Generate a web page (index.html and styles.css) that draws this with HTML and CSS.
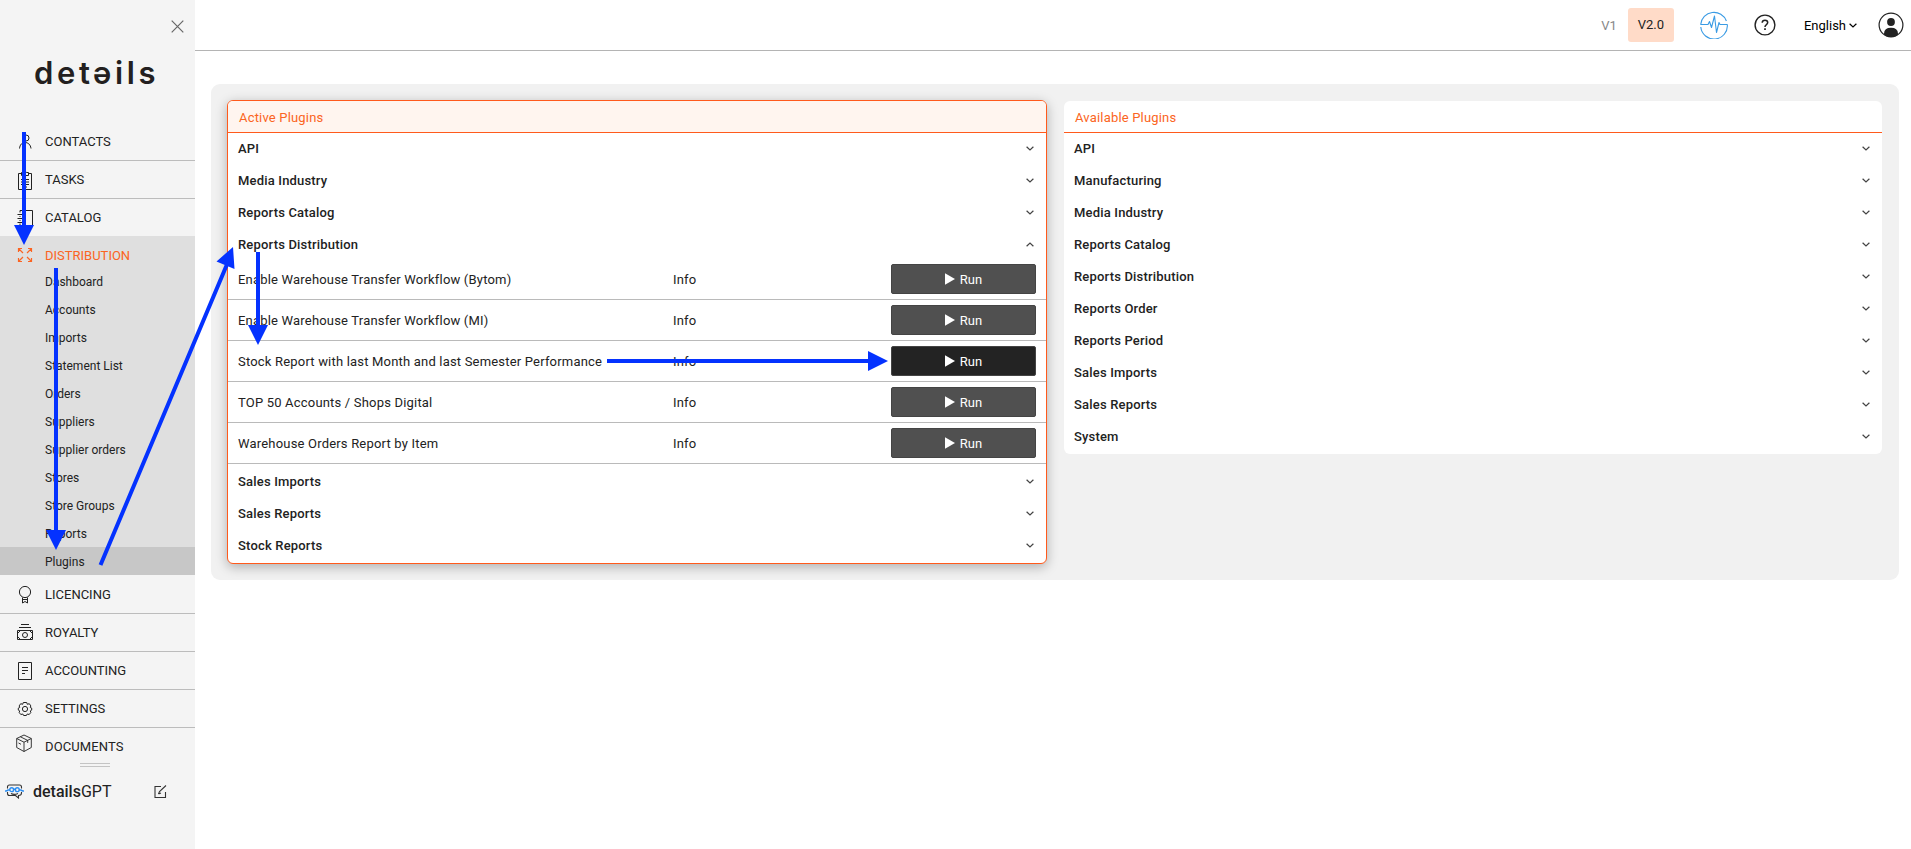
FILE: index.html
```html
<!DOCTYPE html>
<html lang="en">
<head>
<meta charset="utf-8">
<title>details – Plugins</title>
<link rel="stylesheet" href="styles.css">
</head>
<body>
<svg class="defs" width="0" height="0">
  <symbol id="chev" viewBox="0 0 8 5"><path d="M.6.7 4 4 7.400.7" fill="none" stroke="currentColor" stroke-width="1.2"/></symbol>
  <symbol id="play" viewBox="0 0 10 12"><path d="M0 .3 10 6 0 11.700z" fill="currentColor"/></symbol>
</svg>
<div class="app">
  <aside class="sidebar">
    <div class="close-row"><svg width="13" height="13" viewBox="0 0 13 13"><path d="M.7.7 12.300 12.300M12.300.7.7 12.300" stroke="#666" stroke-width="1.200"/></svg></div>
    <div class="logo">detəils</div>
    <nav class="menu">
      <a class="item"><svg class="ico" viewBox="0 0 16 20"><g fill="none" stroke="#222"><circle cx="9" cy="6" r="3"/><path d="M2.500 16.500C3 12.500 5 10.500 8 10.500s5.500 2 6 6"/></g></svg><span>CONTACTS</span></a>
      <a class="item"><svg class="ico down" viewBox="0 0 16 20"><g fill="none" stroke="#222"><path d="M4 2.500H1.500v16h13v-16H12M4.500 4.500v-3h2c0-1.300 3-1.300 3 0h2v3zM4 8.500h8M4 11h8M4 13.500h8M6 16h4"/></g></svg><span>TASKS</span></a>
      <a class="item catalog"><svg class="ico" viewBox="0 0 16 20"><g fill="none" stroke="#222"><path d="M6 2.500h9.500v15H6zM6 2.500H3v2M3 8v1M3 12v1M3 15.500v2h3M.5 6.500h5M.5 10.500h5M.5 14.500h5"/></g></svg><span>CATALOG</span></a>
      <div class="group">
        <a class="item active"><svg class="ico" viewBox="0 0 16 20"><g fill="none" stroke="#fb6422" stroke-width="1.200"><path d="M1.500 7V3.500H5M1.500 3.500 6 8M11 3.500h3.500V7M14.500 3.500 10 8M1.500 13v3.500H5M1.500 16.500 6 12M14.500 13v3.500H11M14.500 16.500 10 12"/></g></svg><span>DISTRIBUTION</span></a>
        <a class="sub">Dashboard</a><a class="sub">Accounts</a><a class="sub">Imports</a><a class="sub">Statement List</a><a class="sub">Orders</a><a class="sub">Suppliers</a><a class="sub">Supplier orders</a><a class="sub">Stores</a><a class="sub">Store Groups</a><a class="sub">Reports</a><a class="sub current">Plugins</a>
      </div>
      <a class="item after-group"><svg class="ico" viewBox="0 0 16 20"><g fill="none" stroke="#222"><circle cx="8" cy="7" r="5.600"/><path d="M5.500 12.500v5.500L8 16.500l2.500 1.500v-5.500M5.500 14.500h5"/></g></svg><span>LICENCING</span></a>
      <a class="item"><svg class="ico" viewBox="0 0 16 20"><g fill="none" stroke="#222"><path d="M4 1.500h8M2 4.500h12M.5 7.500h15v9H.5z"/><circle cx="8" cy="12" r="2.500"/><path d="M.5 10.500 3.500 7.500M15.500 10.500l-3-3M.5 13.500l3 3M15.500 13.500l-3 3"/></g></svg><span>ROYALTY</span></a>
      <a class="item"><svg class="ico" viewBox="0 0 16 20"><g fill="none" stroke="#222"><path d="M1.500 1.500h13v17h-13zM5 6.500h6M5 9.500h6M5 12.500h3"/></g></svg><span>ACCOUNTING</span></a>
      <a class="item"><svg class="ico" viewBox="0 0 16 20"><g fill="none" stroke="#222"><path stroke-linejoin="round" d="M6.300 3.500h3.400l.6 1.800 2-.6 1.500 2.200-.5 1.600 1.400.6v2l-1.400.8.5 1.600-1.600 2-2-.5-.8 1.500H6.600l-.8-1.500-2 .5-1.600-2 .5-1.600-1.400-.8v-2l1.400-.6-.5-1.600 1.500-2.200 2 .6z"/><circle cx="8" cy="10" r="2.600"/></g></svg><span>SETTINGS</span></a>
      <a class="item last"><svg class="ico up" viewBox="0 0 16 20"><g fill="none" stroke="#222" stroke-width=".9" stroke-linejoin="round"><path d="M.7 5.500 8 2l7.300 3.500v9L8 18.500.7 14.500zM.7 5.500 8 9.200l7.300-3.700M8 9.200v9.300M4.400 3.800l7.300 3.600v2.500M2.500 10l2.500 1.300"/></g></svg><span>DOCUMENTS</span></a>
    </nav>
    <div class="grip"></div>
    <div class="gpt">
      <svg width="19" height="15" viewBox="0 0 19 15"><g fill="none"><path stroke="#333" stroke-width="1.100" d="M2.500 4.500V3Q2.500 1 4.500 1h10q2 0 2 2v1.500M2.500 8v1.500q0 2 2 2h6l3 2.500v-2.500q3-.2 3-2.500V8M6 9.500q3 1.800 7 0"/><g stroke="#2a8df2" stroke-width="1.400"><circle cx="6.700" cy="5.700" r="1.900"/><circle cx="12.300" cy="5.700" r="1.900"/><path d="M8.600 5.300h1.800M0 7q2 .3 3-1h1.800M19 7q-2 .3-3-1h-1.800"/></g></g></svg>
      <span class="gpt-name"><b>details</b>GPT</span>
      <svg class="edit" width="13" height="13" viewBox="0 0 13 13"><path d="M7 1.500H1v11h10.500V7M4.500 9l1-2.500L12 .5M4.500 9l2.500-1" fill="none" stroke="#333" stroke-width="1.100"/></svg>
    </div>
  </aside>
  <div class="page">
    <header class="topbar">
      <span class="v1">V1</span>
      <span class="v2">V2.0</span>
      <svg class="pulse" width="28" height="28" viewBox="0 0 28 28"><g fill="none" stroke="#3a9be4" stroke-width="1.100"><path d="M.7 13.500A13.300 13.300 0 0 1 26.400 10M.8 16A13.300 13.300 0 0 0 27.300 13.500"/><path stroke-linejoin="round" d="M.5 13.500H8l1.500-3 2 6L14.500 5l2 16.500 2.500-10 1 2h7.500"/></g></svg>
      <svg class="help" width="22" height="22" viewBox="0 0 22 22"><g fill="none" stroke="#222" stroke-width="1.400"><circle cx="11" cy="11" r="9.900"/><path stroke-width="1.500" d="M8.200 8.800Q8.300 6.200 11 6.200t2.700 2.300Q13.700 9.800 12.200 10.800 11 11.600 11 13"/><path stroke-width="1.700" d="M11 14.300V16"/></g></svg>
      <span class="lang">English<svg width="8" height="5"><use href="#chev"/></svg></span>
      <svg class="user" width="26" height="26" viewBox="0 0 26 26"><clipPath id="uc"><circle cx="13" cy="13" r="12"/></clipPath><circle cx="13" cy="13" r="11.900" fill="none" stroke="#222" stroke-width="1.200"/><circle cx="13" cy="10" r="3.900" fill="#222"/><path clip-path="url(#uc)" d="M6 26v-4.500Q6.200 15.800 13 15.800t7 5.700V26z" fill="#222"/></svg>
    </header>
    <main class="board">
      <section class="card picked">
        <h2>Active Plugins</h2>
        <div class="cat">API<svg><use href="#chev"/></svg></div>
        <div class="cat">Media Industry<svg><use href="#chev"/></svg></div>
        <div class="cat">Reports Catalog<svg><use href="#chev"/></svg></div>
        <div class="cat open">Reports Distribution<svg><use href="#chev"/></svg></div>
        <div class="rows">
          <div class="row"><span>Enable Warehouse Transfer Workflow (Bytom)</span><span>Info</span><button><svg><use href="#play"/></svg>Run</button></div>
          <div class="row"><span>Enable Warehouse Transfer Workflow (MI)</span><span>Info</span><button><svg><use href="#play"/></svg>Run</button></div>
          <div class="row"><span>Stock Report with last Month and last Semester Performance</span><span>Info</span><button class="hover"><svg><use href="#play"/></svg>Run</button></div>
          <div class="row"><span>TOP 50 Accounts / Shops Digital</span><span>Info</span><button><svg><use href="#play"/></svg>Run</button></div>
          <div class="row"><span>Warehouse Orders Report by Item</span><span>Info</span><button><svg><use href="#play"/></svg>Run</button></div>
        </div>
        <div class="cat">Sales Imports<svg><use href="#chev"/></svg></div>
        <div class="cat">Sales Reports<svg><use href="#chev"/></svg></div>
        <div class="cat">Stock Reports<svg><use href="#chev"/></svg></div>
      </section>
      <section class="card">
        <h2>Available Plugins</h2>
        <div class="cat">API<svg><use href="#chev"/></svg></div>
        <div class="cat">Manufacturing<svg><use href="#chev"/></svg></div>
        <div class="cat">Media Industry<svg><use href="#chev"/></svg></div>
        <div class="cat">Reports Catalog<svg><use href="#chev"/></svg></div>
        <div class="cat">Reports Distribution<svg><use href="#chev"/></svg></div>
        <div class="cat">Reports Order<svg><use href="#chev"/></svg></div>
        <div class="cat">Reports Period<svg><use href="#chev"/></svg></div>
        <div class="cat">Sales Imports<svg><use href="#chev"/></svg></div>
        <div class="cat">Sales Reports<svg><use href="#chev"/></svg></div>
        <div class="cat">System<svg><use href="#chev"/></svg></div>
      </section>
    </main>
  </div>
</div>
<svg class="arrows" viewBox="0 0 1911 849">
  <g stroke="#0432ff" stroke-width="4"><path d="M24 132v95M56 268v264M258 252v75M607 361h263M100.500 565 228 262"/></g>
  <g fill="#0432ff"><path d="M14 225h20l-10 20zM46 530h20l-10 20zM248 325h20l-10 20zM868 351v20l20-10zM233 247l1.500 22-18-7.500z"/></g>
</svg>
</body>
</html>
```
FILE: styles.css
```css
* { box-sizing: border-box; }
body { margin: 0; font-family: Roboto, "Liberation Sans", sans-serif; font-size: 14px; color: #222; background: #fff; overflow: hidden; }
.defs { position: absolute; }
svg { display: block; flex: none; }
.app { display: flex; height: 849px; }

.sidebar { width: 195px; background: #f4f4f4; flex: none; }
.close-row { display: flex; justify-content: flex-end; padding: 20px 11px 0 0; height: 50px; }
.logo { height: 73px; padding: 5px 0 0 34px; font: 600 31px/36px Inter, sans-serif; letter-spacing: 3.6px; color: #231f20; white-space: nowrap; }
.item { display: flex; align-items: center; gap: 12px; height: 38px; padding-left: 17px; border-bottom: 1px solid #bcbcbc; font-size: 13px; }
.item .ico { width: 16px; height: 20px; }
.item .down { margin-top: 3px; }
.item .up { margin: -8px 0 0 -1px; }
.item.last span { margin-left: 1px; letter-spacing: .1px; }
.item.catalog { height: 37px; border-bottom: 0; }
.item.after-group { margin-top: 1px; }
.item.last { border-bottom: 0; height: 37px; }
.group { background: #dfdfdf; height: 339px; }
.item.active { color: #fb6422; border: 0; height: 31px; padding-top: 7px; }
.sub { display: flex; align-items: center; height: 28px; padding: 2px 0 0 45px; font-size: 12px; }
.sub.current { background: #c7c7c7; }
.grip { width: 30px; height: 4px; margin: -2px 0 0 80px; border: solid #c4c4c4; border-width: 1px 0; }
.gpt { display: flex; align-items: center; height: 30px; margin-top: 9px; padding-left: 5px; }
.gpt-name { margin-left: 9px; font-size: 16px; width: 121px; }
.gpt-name b { font-weight: 500; }

.page { flex: 1; display: flex; flex-direction: column; }
.topbar { height: 51px; border-bottom: 1px solid #b4b4b4; display: flex; align-items: center; justify-content: flex-end; padding-right: 7px; font-size: 13px; }
.v1 { color: #888; margin-right: 11px; }
.v2 { width: 46px; height: 34px; line-height: 34px; text-align: center; background: #ffdbc8; border-radius: 3px; margin-right: 26px; }
.pulse { margin-right: 26px; }
.help { margin-right: 28px; }
.lang { display: flex; align-items: center; gap: 3px; color: #000; margin-right: 21px; }

.board { display: grid; grid-template-columns: 820px 818px; gap: 17px; align-items: start; margin: 33px 12px 0 16px; padding: 16px; height: 496px; background: #f1f1f1; border-radius: 9px; }
.card { background: #fff; border-radius: 6px; overflow: hidden; margin-top: 1px; height: 353px; }
.card.picked { margin-top: 0; height: 464px; border: 1px solid #ff5a1c; box-shadow: 0 3px 12px rgba(0,0,0,.28); }
h2 { margin: 0; height: 32px; padding-left: 11px; font-size: 13px; line-height: 33px; font-weight: 400; letter-spacing: .18px; color: #fb6422; border-bottom: 1px solid #ff5a1c; }
.picked h2 { background: #fff5ef; }
.cat { display: flex; align-items: center; justify-content: space-between; height: 32px; padding: 0 12px 2px 10px; font-size: 13px; font-weight: 500; letter-spacing: .18px; }
.cat svg { width: 8px; height: 5px; color: #444; }
.cat.open svg { transform: rotate(180deg); }
.row { display: grid; grid-template-columns: 435px 218px 145px; align-items: center; height: 41px; padding-left: 10px; border-bottom: 1px solid #bababa; font-size: 13px; letter-spacing: .19px; }
.rows { margin-top: -2px; margin-bottom: 2px; }
button { height: 30px; display: flex; align-items: center; justify-content: center; gap: 5px; padding: 0; border: 1px solid #444; border-radius: 2px; background: #505050; color: #fff; font: 13px Roboto, sans-serif; }
button.hover { background: #232323; }
button svg { width: 10px; height: 12px; }

/* Tutorial arrows drawn over the interface */
.arrows { position: absolute; left: 0; top: 0; width: 1911px; height: 849px; pointer-events: none; }
```
